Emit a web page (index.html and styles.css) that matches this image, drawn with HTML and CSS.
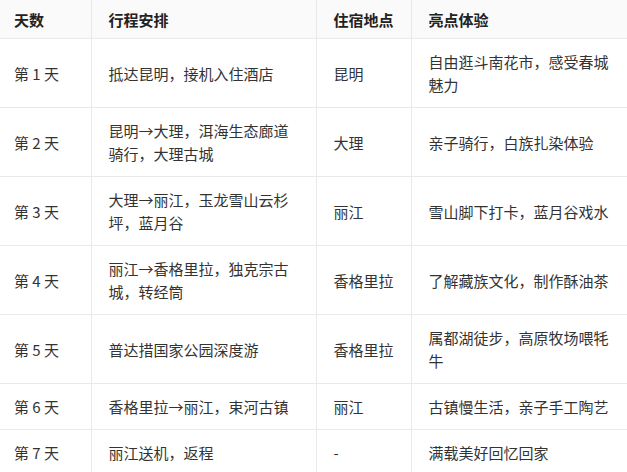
FILE: index.html
```html
<!DOCTYPE html>
<html lang="zh">
<head>
<meta charset="utf-8">
<title>行程安排</title>
<link rel="stylesheet" href="styles.css">
</head>
<body>
<table class="plan">
  <colgroup>
    <col class="c-day">
    <col class="c-route">
    <col class="c-stay">
    <col class="c-high">
  </colgroup>
  <thead>
    <tr><th>天数</th><th>行程安排</th><th>住宿地点</th><th>亮点体验</th></tr>
  </thead>
  <tbody>
    <tr><td>第 1 天</td><td>抵达昆明，接机入住酒店</td><td>昆明</td><td>自由逛斗南花市，感受春城魅力</td></tr>
    <tr><td>第 2 天</td><td>昆明→大理，洱海生态廊道骑行，大理古城</td><td>大理</td><td>亲子骑行，白族扎染体验</td></tr>
    <tr><td>第 3 天</td><td>大理→丽江，玉龙雪山云杉坪，蓝月谷</td><td>丽江</td><td>雪山脚下打卡，蓝月谷戏水</td></tr>
    <tr><td>第 4 天</td><td>丽江→香格里拉，独克宗古城，转经筒</td><td>香格里拉</td><td>了解藏族文化，制作酥油茶</td></tr>
    <tr><td>第 5 天</td><td>普达措国家公园深度游</td><td>香格里拉</td><td>属都湖徒步，高原牧场喂牦牛</td></tr>
    <tr><td>第 6 天</td><td>香格里拉→丽江，束河古镇</td><td>丽江</td><td>古镇慢生活，亲子手工陶艺</td></tr>
    <tr><td>第 7 天</td><td>丽江送机，返程</td><td>-</td><td>满载美好回忆回家</td></tr>
  </tbody>
</table>
</body>
</html>
```
FILE: styles.css
```css
html, body {
  margin: 0;
  padding: 0;
  background: #ffffff;
  overflow: hidden;
}
body {
  width: 627px;
  height: 472px;
  font-family: "Noto Sans CJK SC", "Noto Sans", sans-serif;
  color: #333333;
  font-size: 15px;
}
.plan {
  border-collapse: collapse;
  table-layout: fixed;
  width: 636px;
}
.c-day { width: 91px; }
.c-route { width: 225px; }
.c-stay { width: 95px; }
.c-high { width: 225px; }
.plan th, .plan td {
  border: 1px solid #e9e9e9;
  text-align: left;
  vertical-align: middle;
  line-height: 23px;
  padding: 11px 17px;
}
.plan th {
  padding-top: 8px;
  padding-bottom: 7px;
  font-weight: bold;
  color: #222222;
  background: #fafafa;
}
.plan tr > :first-child {
  border-left: none;
  padding-left: 14px;
}
.plan thead th {
  border-top: none;
}
```
